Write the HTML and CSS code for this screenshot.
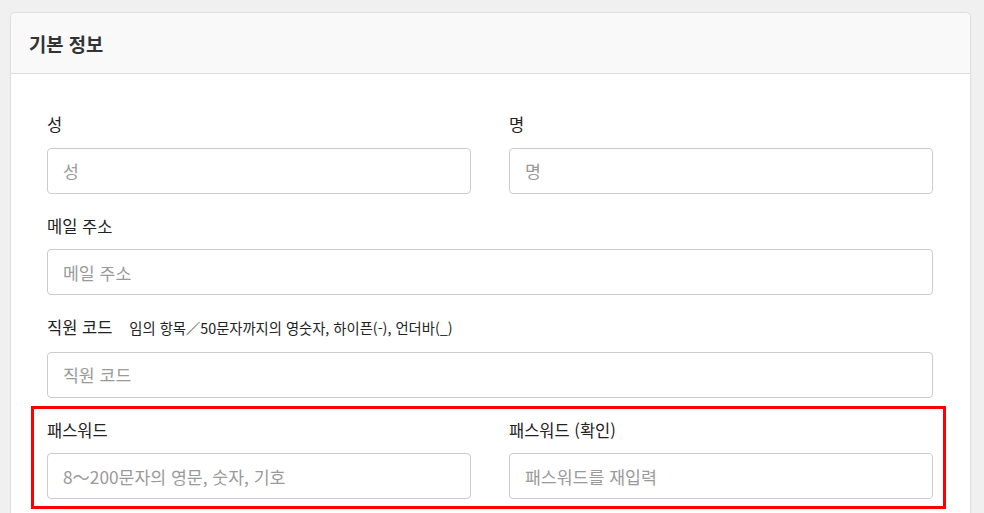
FILE: index.html
```html
<!DOCTYPE html>
<html lang="ko">
<head>
<meta charset="utf-8">
<title>기본 정보</title>
<link rel="stylesheet" href="styles.css">
</head>
<body>
<section class="card">
  <header class="card-header">
    <h2 class="card-title">기본 정보</h2>
  </header>
  <div class="card-body">
    <div class="row two">
      <div class="field">
        <label class="label">성</label>
        <input class="input" type="text" placeholder="성">
      </div>
      <div class="field">
        <label class="label">명</label>
        <input class="input" type="text" placeholder="명">
      </div>
    </div>
    <div class="row">
      <div class="field">
        <label class="label">메일 주소</label>
        <input class="input" type="text" placeholder="메일 주소">
      </div>
    </div>
    <div class="row">
      <div class="field">
        <label class="label">직원 코드<span class="hint">임의 항목／50문자까지의 영숫자, 하이픈(-), 언더바(_)</span></label>
        <input class="input" type="text" placeholder="직원 코드">
      </div>
    </div>
    <div class="row two highlighted">
      <div class="field">
        <label class="label">패스워드</label>
        <input class="input" type="password" placeholder="8～200문자의 영문, 숫자, 기호">
      </div>
      <div class="field">
        <label class="label">패스워드 (확인)</label>
        <input class="input" type="password" placeholder="패스워드를 재입력">
      </div>
    </div>
  </div>
</section>
</body>
</html>
```

FILE: styles.css
```css
* {
  box-sizing: border-box;
}

html, body {
  margin: 0;
  padding: 0;
  background: #f0f0f0;
  font-family: "Noto Sans CJK KR", "Noto Sans", sans-serif;
  color: #333;
}

body {
  padding: 12px 13px 0 10px;
  overflow: hidden;
  height: 513px;
}

.card {
  background: #fff;
  border: 1px solid #dddddd;
  border-radius: 5px;
  min-height: 600px;
}

.card-header {
  background: #f9f9f9;
  border-bottom: 1px solid #dddddd;
  border-radius: 5px 5px 0 0;
  height: 61px;
  padding: 0 18px;
  display: flex;
  align-items: center;
}

.card-title {
  margin: 0;
  font-size: 18.75px;
  font-weight: 700;
  color: #333;
  line-height: 1;
  padding-top: 3px;
}

.card-body {
  padding: 39px 37px 0 36px;
}

.row {
  display: grid;
  grid-template-columns: 1fr;
  margin-bottom: 21px;
}

.row.two {
  grid-template-columns: 424px 424px;
  column-gap: 38px;
}

.field {
  display: flex;
  flex-direction: column;
}

.label {
  font-size: 16.5px;
  line-height: 22.5px;
  font-weight: 400;
  color: #222;
  margin-bottom: 12px;
}

.hint {
  font-size: 14.3px;
  font-weight: 400;
  margin-left: 17px;
  color: #222;
}

.input {
  height: 46px;
  border: 1px solid #cccccc;
  border-radius: 4px;
  padding: 0 15px;
  font-family: inherit;
  font-size: 17.25px;
  color: #333;
  background: #fff;
  outline: none;
}

.input::placeholder {
  color: #9a9a9a;
}

.highlighted {
  position: relative;
}

.highlighted::after {
  content: "";
  position: absolute;
  top: -13px;
  left: -16px;
  right: -13px;
  bottom: -10px;
  border: 3px solid #ff0000;
  pointer-events: none;
}
```
